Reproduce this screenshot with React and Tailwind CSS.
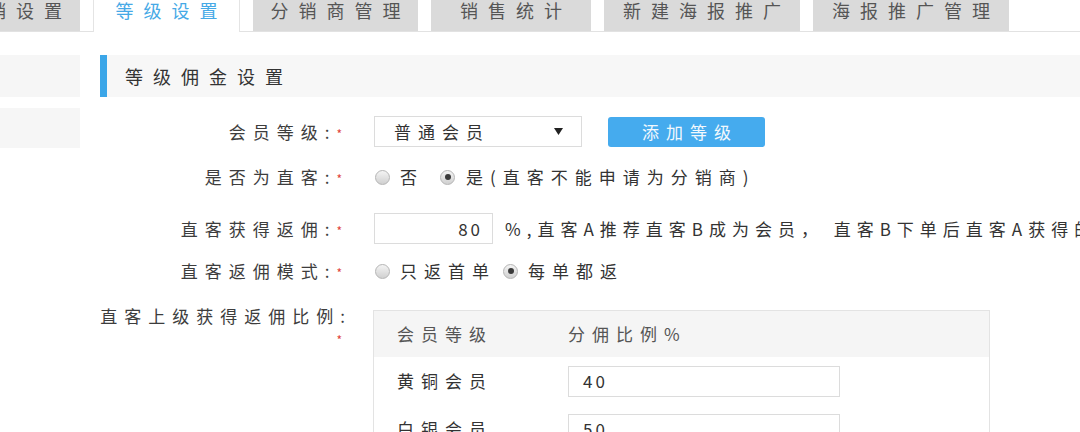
import React from "react";

const tabs = [
  { label: "分销设置", cls: "w-[160px] -ml-[80px] justify-end pr-[8px]" },
  { label: "等级设置", cls: "w-[147px] justify-center pl-[10px]", active: true },
  { label: "分销商管理", cls: "w-[165px] justify-center pl-[10px]" },
  { label: "销售统计", cls: "w-[160px] justify-center pl-[10px]" },
  { label: "新建海报推广", cls: "w-[196px] justify-center pl-[10px]" },
  { label: "海报推广管理", cls: "w-[196px] justify-center pl-[10px]" },
];

function Radio({ checked }) {
  return (
    <span className="w-[15px] h-[15px] shrink-0 rounded-full border border-[#b5b5b5] bg-linear-to-b from-[#f4f4f4] to-[#d0d0d0] flex items-center justify-center">
      {checked && <span className="w-[6px] h-[6px] rounded-full bg-[#3a3a3a]" />}
    </span>
  );
}

function Label({ children }) {
  return (
    <div className="w-[242px] shrink-0 text-right whitespace-nowrap text-[#3d3d3d]">
      {children}
      <span className="text-[12px] tracking-normal text-[#e0443c]">*</span>
    </div>
  );
}

export default function App() {
  return (
    <div className="w-[1080px] h-[432px] overflow-hidden bg-white font-['Noto_Sans_CJK_SC','Noto_Sans',sans-serif] text-[17px] tracking-[7px] text-[#333]">
      {/* tabs */}
      <div className="flex h-[32px] gap-[13px] border-b border-[#e2e2e2] whitespace-nowrap">
        {tabs.map((t) => (
          <div
            key={t.label}
            className={
              t.active
                ? `${t.cls} shrink-0 h-[32px] -mb-[1px] bg-white border-x border-[#e4e4e4] flex text-[18px] tracking-[10px] leading-[20px] text-[#45a9e6]`
                : `${t.cls} shrink-0 h-full bg-[#dadada] flex text-[18px] tracking-[10px] leading-[20px] text-[#555]`
            }
          >
            {t.label}
          </div>
        ))}
      </div>

      <div className="flex pt-[23px]">
        {/* side menu */}
        <div className="w-[80px] shrink-0 flex flex-col gap-[11px]">
          <div className="h-[42px] bg-[#f6f6f6]" />
          <div className="h-[40px] bg-[#f6f6f6]" />
        </div>

        <div className="ml-[20px] flex-1 min-w-0">
          <div className="h-[42px] bg-[#f7f7f7] border-l-[7px] border-[#3ba6e8] flex items-center pl-[18px] text-[18px] tracking-[10px] text-[#333]">
            等级佣金设置
          </div>

          {/* 会员等级 */}
          <div className="flex items-center h-[31px] mt-[19px]">
            <Label>会员等级:</Label>
            <div className="ml-[32px] w-[208px] h-[31px] border border-[#dcdcdc] flex items-center justify-between pl-[19px] pr-[18px]">
              <span>普通会员</span>
              <svg width="9" height="7" viewBox="0 0 9 7">
                <path d="M0 0h9L4.5 7z" fill="#222" />
              </svg>
            </div>
            <button className="ml-[26px] w-[157px] h-[30px] rounded-[3px] bg-[#45abee] text-[#f2f8fd] pl-[7px]">
              添加等级
            </button>
          </div>

          {/* 是否为直客 */}
          <div className="flex items-center h-[24px] mt-[18px]">
            <Label>是否为直客:</Label>
            <div className="ml-[33px] flex items-center whitespace-nowrap">
              <Radio />
              <span className="ml-[10px]">否</span>
              <span className="ml-[16px]">
                <Radio checked />
              </span>
              <span className="ml-[11px]">是(直客不能申请为分销商)</span>
            </div>
          </div>

          {/* 直客获得返佣 */}
          <div className="flex items-center h-[31px] mt-[24px]">
            <Label>直客获得返佣:</Label>
            <div className="ml-[32px] w-[119px] h-[31px] shrink-0 border border-[#dcdcdc] flex items-center justify-end pr-[9px] tracking-[3px]">
              80
            </div>
            <span className="ml-[12px] whitespace-nowrap tracking-[6px]">%,直客A推荐直客B成为会员， 直客B下单后直客A获得的返佣比例</span>
          </div>

          {/* 直客返佣模式 */}
          <div className="flex items-center h-[24px] mt-[15px]">
            <Label>直客返佣模式:</Label>
            <div className="ml-[33px] flex items-center whitespace-nowrap">
              <Radio />
              <span className="ml-[10px]">只返首单</span>
              <span className="ml-[7px]">
                <Radio checked />
              </span>
              <span className="ml-[10px]">每单都返</span>
            </div>
          </div>

          {/* 直客上级获得返佣比例 */}
          <div className="flex items-start mt-[27px]">
            <div className="w-[242px] shrink-0 text-right whitespace-nowrap text-[#3d3d3d] -mt-[4px] leading-[20px]">
              <div>
                <span className="-mr-[10px]">直客上级获得返佣比例:</span>
              </div>
              <div className="mt-[4px] text-[12px] tracking-normal text-[#e0443c]">*</div>
            </div>
            <div className="ml-[31px] w-[617px] shrink-0 border border-[#e3e3e3]">
              <div className="h-[46px] bg-[#f5f5f5] flex items-center text-[#555]">
                <div className="w-[194px] pl-[23px]">会员等级</div>
                <div>分佣比例%</div>
              </div>
              {[
                ["黄铜会员", "40"],
                ["白银会员", "50"],
              ].map(([name, val]) => (
                <div key={name} className="h-[48px] flex items-center">
                  <div className="w-[194px] pl-[23px]">{name}</div>
                  <div className="w-[272px] h-[31px] border border-[#dcdcdc] flex items-center pl-[14px] tracking-[3px]">
                    {val}
                  </div>
                </div>
              ))}
            </div>
          </div>
        </div>
      </div>
    </div>
  );
}
